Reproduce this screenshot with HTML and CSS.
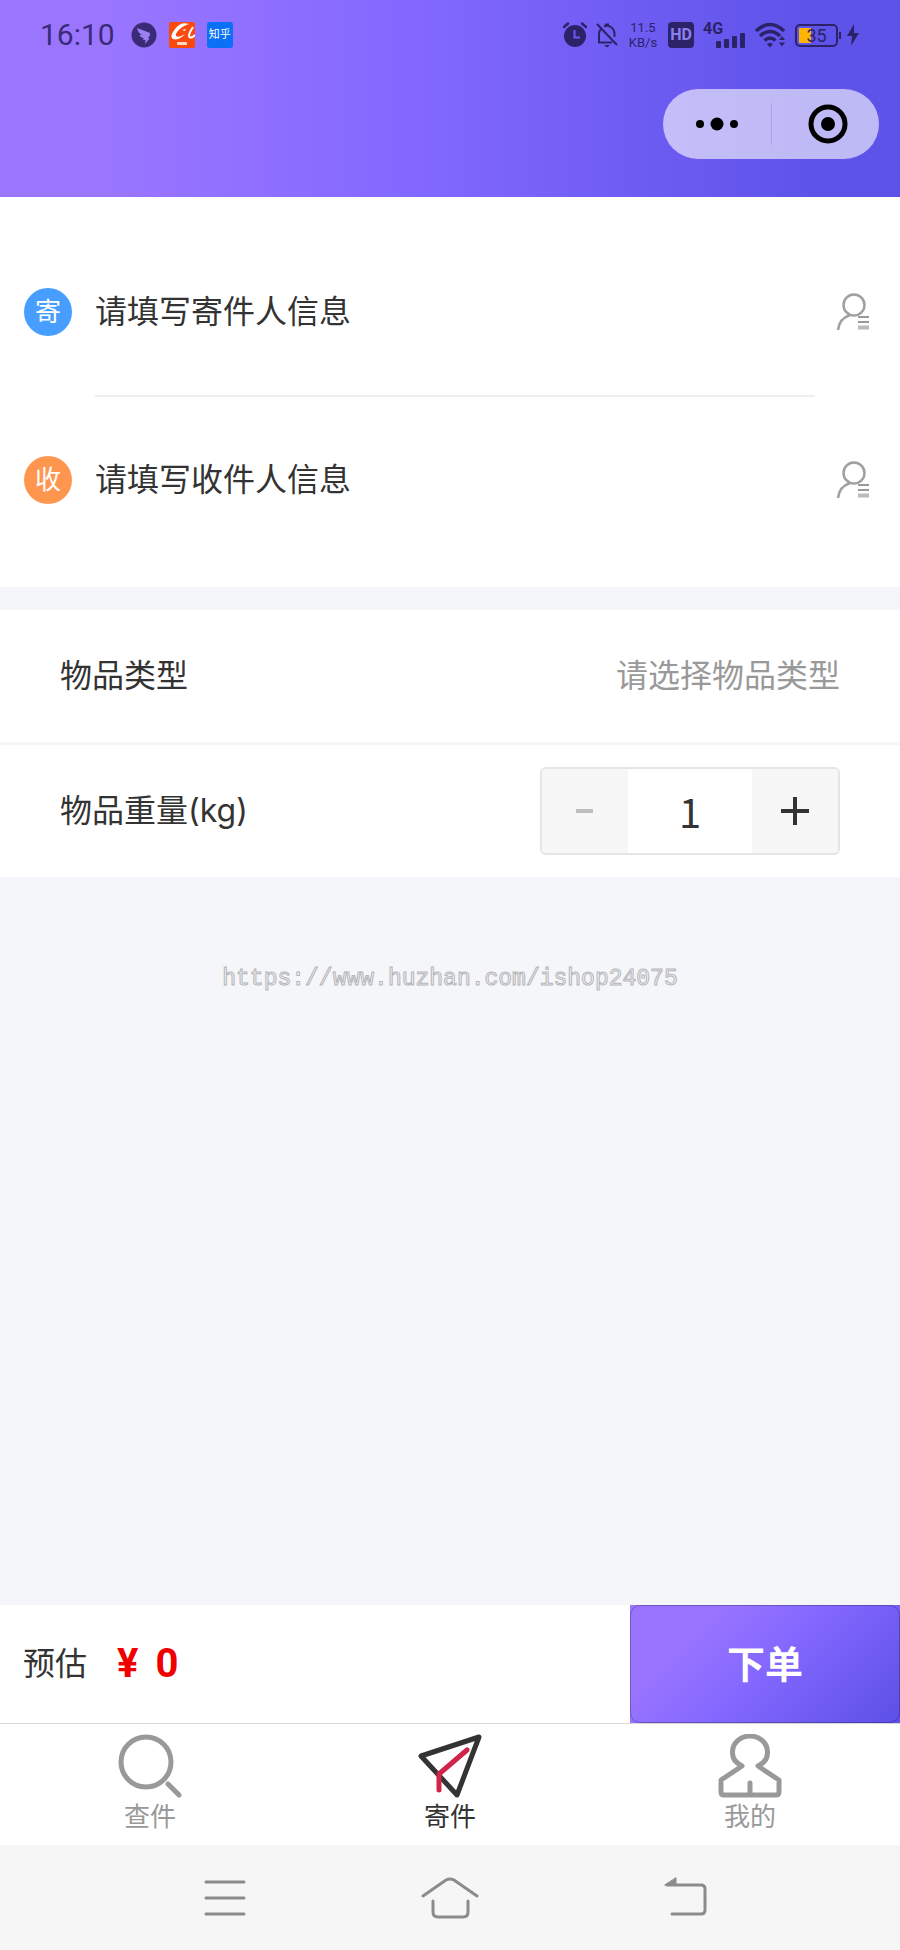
FILE: index.html
```
<!DOCTYPE html>
<html lang="zh-CN">
<head>
    <meta charset="UTF-8">
    <meta name="viewport" content="width=device-width, initial-scale=1.0">
    <title>寄件</title>
    <link rel="stylesheet" href="styles.css">
</head>
<body>
    <header class="header">
        <div class="status-bar">
            <div class="status-left">
                <span class="time">16:10</span>
                <svg width="26" height="26" viewBox="0 0 26 26">
                    <circle cx="13" cy="13" r="12.500" fill="#3b2a78"/>
                    <path d="M6 6 L18 10.500 Q20 11.500 18.500 14 L17 16 L18.500 16.500 L14 22 L14.500 18 L11.500 17.500 L13 16 Q9 15.500 8.500 13 L11 13 Q7 11 6 6 Z" fill="#9a80f0"/>
                </svg>
                <svg width="26" height="26" viewBox="0 0 26 26">
                    <rect width="26" height="26" rx="2" fill="#fb4a0e"/>
                    <path d="M20 2 Q12 -1 6 7 Q0 15 4 17 Q10 19 16 12 Q10 16 7 14 Q6 11 12 6 Q16 3 20 2 Z M13 8 L17 7 L16 9 Z" fill="#fff"/>
                    <path d="M24 5 Q18 14 21 15.500 Q23 16 26 13" fill="none" stroke="#fff" stroke-width="2"/>
                    <rect x="8" y="20" width="10" height="3" rx="1" fill="#ffd6c2"/>
                </svg>
                <span class="zhihu">知乎</span>
            </div>
            <div class="status-right">
                <svg width="24" height="26" viewBox="0 0 24 26">
                    <circle cx="12" cy="14" r="11" fill="#2c2267"/>
                    <path d="M1 5 L5 1.500 M23 5 L19 1.500" stroke="#2c2267" stroke-width="2.500" stroke-linecap="round"/>
                    <path d="M11.500 8 V15.500 H17" fill="none" stroke="#6a5bee" stroke-width="2"/>
                </svg>
                <svg width="22" height="26" viewBox="0 0 22 26">
                    <path d="M3 20 V12 Q3 9 5 7 M8 4.500 Q11 3 14 4.500 Q18.500 7 18.500 12 V15 M2 20.500 H16" fill="none" stroke="#2c2267" stroke-width="2"/>
                    <path d="M9 1.500 H13 V4 H9 Z M8 23 H14 L11 25.500 Z" fill="#2c2267"/>
                    <path d="M1 2 L21 23" stroke="#2c2267" stroke-width="2"/>
                </svg>
                <span class="speed"><span>11.5</span><span>KB/s</span></span>
                <span class="hd">HD</span>
                <span class="signal">
                    <span class="signal-label">4G</span>
                    <svg width="30" height="15" viewBox="0 0 30 15">
                        <g fill="#2c2267">
                            <rect x="0" y="8" width="5" height="7" rx="1"/>
                            <rect x="8" y="6" width="5" height="9" rx="1"/>
                            <rect x="16" y="3" width="5" height="12" rx="1"/>
                            <rect x="24" y="0" width="5" height="15" rx="1"/>
                        </g>
                    </svg>
                </span>
                <svg width="31" height="26" viewBox="0 0 31 26">
                    <g fill="none" stroke="#2c2267" stroke-width="3.500">
                        <path d="M1 9 Q15 -4 29 9"/>
                        <path d="M5 14 Q15 5 25 14"/>
                        <path d="M9.500 18.500 Q15 13.500 20.500 18.500"/>
                    </g>
                    <path d="M12 22 Q15 20 18 22 L15 25.500 Z M24 18 L27 14 L30 18 Z M24 20.500 L27 24.500 L30 20.500 Z" fill="#2c2267"/>
                </svg>
                <span class="battery">35</span>
                <svg width="12" height="22" viewBox="0 0 12 22">
                    <path d="M7 0 L0 12 H5 L4 22 L12 9 H7 Z" fill="#2c2267"/>
                </svg>
            </div>
        </div>
        <div class="capsule">
            <button class="capsule-btn" type="button" aria-label="更多">
                <svg width="44" height="16" viewBox="0 0 44 16">
                    <circle cx="5" cy="8" r="4"/>
                    <circle cx="22" cy="8" r="6.500"/>
                    <circle cx="39" cy="8" r="4"/>
                </svg>
            </button>
            <button class="capsule-btn" type="button" aria-label="关闭">
                <svg width="40" height="40" viewBox="0 0 40 40">
                    <circle cx="20" cy="20" r="17" fill="none" stroke="#000" stroke-width="5"/>
                    <circle cx="20" cy="20" r="7"/>
                </svg>
            </button>
        </div>
    </header>

    <main class="main">
        <section class="address">
            <div class="address-row">
                <span class="badge badge-send">寄</span>
                <a class="address-text" href="#sender">请填写寄件人信息</a>
                <button type="button" aria-label="寄件人地址簿">
                    <svg width="34" height="38" viewBox="0 0 34 38">
                        <circle cx="18" cy="12" r="10.500" fill="none" stroke="#a0a0a0" stroke-width="2.500"/>
                        <path d="M14 22 Q3 26 2 37" fill="none" stroke="#a0a0a0" stroke-width="2.500"/>
                        <path d="M22 24 H33 M22 29 H33" stroke="#999" stroke-width="2"/>
                        <path d="M22 34.500 H33" stroke="#bbb" stroke-width="4"/>
                    </svg>
                </button>
            </div>
            <hr class="address-line">
            <div class="address-row">
                <span class="badge badge-receive">收</span>
                <a class="address-text" href="#receiver">请填写收件人信息</a>
                <button type="button" aria-label="收件人地址簿">
                    <svg width="34" height="38" viewBox="0 0 34 38">
                        <circle cx="18" cy="12" r="10.500" fill="none" stroke="#a0a0a0" stroke-width="2.500"/>
                        <path d="M14 22 Q3 26 2 37" fill="none" stroke="#a0a0a0" stroke-width="2.500"/>
                        <path d="M22 24 H33 M22 29 H33" stroke="#999" stroke-width="2"/>
                        <path d="M22 34.500 H33" stroke="#bbb" stroke-width="4"/>
                    </svg>
                </button>
            </div>
        </section>

        <section class="goods">
            <div class="goods-row">
                <label for="goodsType">物品类型</label>
                <select id="goodsType" class="goods-type">
                    <option>请选择物品类型</option>
                </select>
            </div>
            <div class="goods-row">
                <label for="weight">物品重量(kg)</label>
                <div class="stepper">
                    <button id="minusBtn" class="step-btn" type="button" aria-label="减少" disabled>
                        <svg width="28" height="28" viewBox="0 0 28 28"><path d="M5 14 H22" stroke="#bfbfbf" stroke-width="4"/></svg>
                    </button>
                    <input id="weight" class="step-input" type="text" inputmode="numeric" value="1">
                    <button id="plusBtn" class="step-btn" type="button" aria-label="增加">
                        <svg width="28" height="28" viewBox="0 0 28 28"><path d="M0 14 H28 M14 0 V28" stroke="#333" stroke-width="4"/></svg>
                    </button>
                </div>
            </div>
        </section>

        <p class="watermark">https://www.huzhan.com/ishop24075</p>
    </main>

    <footer>
        <div class="order-bar">
            <span class="order-label">预估</span>
            <span class="price"><span>¥</span><span>0</span></span>
            <div class="order-action">
                <button class="order-btn" type="button">下单</button>
            </div>
        </div>
        <nav class="tab-bar">
            <a class="tab" href="#query">
                <svg width="64" height="64" viewBox="0 0 64 64" fill="none" stroke="#999" stroke-width="5" stroke-linecap="round">
                    <circle cx="28" cy="28" r="25"/>
                    <path d="M50 50 L61 61"/>
                </svg>
                <span>查件</span>
            </a>
            <a class="tab active" href="#send">
                <svg width="64" height="64" viewBox="0 0 64 64" fill="none" stroke-width="5" stroke-linecap="round" stroke-linejoin="round">
                    <path d="M3 22 L61 3 L39 61 Z" stroke="#333"/>
                    <path d="M49 16 L21 40 V56" stroke="#d0244b"/>
                </svg>
                <span>寄件</span>
            </a>
            <a class="tab" href="#mine">
                <svg width="64" height="64" viewBox="0 0 64 64" fill="none" stroke="#999" stroke-width="5" stroke-linecap="round" stroke-linejoin="round">
                    <path d="M24 32 Q14 27 14.500 18 A17.500 16 0 0 1 49.500 18 Q50 27 40 32 L61 46 V58 Q61 61 58 61 H6 Q3 61 3 58 V46 Z"/>
                    <path d="M32 49 V60"/>
                </svg>
                <span>我的</span>
            </a>
        </nav>
        <div class="system-nav">
            <button type="button" aria-label="最近任务">
                <svg width="42" height="42" viewBox="0 0 42 42" fill="none" stroke="#8b8b8b" stroke-width="3" stroke-linecap="round">
                    <path d="M2 5 H40 M2 21 H40 M2 37 H40"/>
                </svg>
            </button>
            <button type="button" aria-label="主屏幕">
                <svg width="58" height="42" viewBox="0 0 58 42" fill="none" stroke="#8b8b8b" stroke-width="3" stroke-linecap="round">
                    <path d="M2 19 L25 3 Q29 1 33 3 L56 19"/>
                    <path d="M12 24 V35 Q12 40 17 40 H42 Q47 40 47 35 V24"/>
                </svg>
            </button>
            <button type="button" aria-label="返回">
                <svg width="64" height="42" viewBox="0 0 64 42" fill="none" stroke="#8b8b8b" stroke-width="3" stroke-linecap="round">
                    <path d="M24 8 H58 Q62 8 62 12 V33 Q62 37 58 37 H29"/>
                    <path d="M33 1 V8 H22 Z" fill="#8b8b8b" stroke-width="1"/>
                </svg>
            </button>
        </div>
    </footer>

    <script>
        const minusBtn = document.getElementById('minusBtn');
        const plusBtn = document.getElementById('plusBtn');
        const weight = document.getElementById('weight');

        // Weight never drops below 1 kg
        function setWeight(value) {
            weight.value = Math.max(1, value);
            minusBtn.disabled = weight.value <= 1;
        }

        minusBtn.addEventListener('click', () => setWeight(Number(weight.value) - 1));
        plusBtn.addEventListener('click', () => setWeight(Number(weight.value) + 1));
    </script>
</body>
</html>
```
FILE: styles.css
```
* {
    box-sizing: border-box;
}
body {
    display: flex;
    flex-direction: column;
    min-height: 100vh;
    margin: 0;
    background-color: #f4f6fa;
    color: #333;
    font-family: Inter, "Noto Sans CJK SC", sans-serif;
    font-size: 32px;
    line-height: 48px;
}
button,
input,
select {
    margin: 0;
    padding: 0;
    border: none;
    background: none;
    color: inherit;
    font: inherit;
}
button {
    display: flex;
    align-items: center;
    justify-content: center;
    cursor: pointer;
}
a {
    color: inherit;
    text-decoration: none;
}
svg {
    display: block;
    flex: none;
}

/* header */
.header {
    padding-bottom: 38px;
    background: linear-gradient(90deg, #9a76ff 12%, #8469ff 44%, #5e53e9 90%);
}
.status-bar {
    display: flex;
    align-items: center;
    justify-content: space-between;
    height: 70px;
    padding: 0 41px 0 40px;
    color: #2c2267;
    font-family: Roboto, "Noto Sans CJK SC", sans-serif;
}
.status-left,
.status-right {
    display: flex;
    align-items: center;
}
.status-left {
    gap: 12px;
}
.status-right {
    gap: 9px;
}
.time {
    margin-right: 4px;
    color: #3b2a78;
    font-size: 30px;
}
.zhihu {
    width: 26px;
    height: 26px;
    border-radius: 3px;
    background-color: #0a70f5;
    color: white;
    font-size: 11px;
    line-height: 25px;
    text-align: center;
}
.speed {
    display: flex;
    flex-direction: column;
    align-items: center;
    width: 32px;
    font-size: 13px;
    line-height: 15px;
}
.hd {
    width: 26px;
    height: 26px;
    border-radius: 4px;
    background-color: #2c2267;
    color: #8b80f2;
    font-size: 16px;
    font-weight: bold;
    line-height: 26px;
    text-align: center;
}
.signal {
    display: flex;
    flex-direction: column;
    align-items: flex-end;
    width: 43px;
    height: 26px;
}
.signal-label {
    align-self: flex-start;
    height: 11px;
    font-size: 16px;
    font-weight: bold;
    line-height: 14px;
}
.battery {
    position: relative;
    width: 43px;
    height: 23px;
    padding: 2px;
    border: 2px solid #2c2267;
    border-radius: 5px;
    background: linear-gradient(90deg, #ffb400 12px, transparent 12px) content-box;
    font-size: 18px;
    line-height: 16px;
    text-align: center;
}
.battery::after {
    content: "";
    position: absolute;
    top: 6px;
    right: -5px;
    width: 2px;
    height: 7px;
    background-color: #2c2267;
}
.capsule {
    display: flex;
    align-items: center;
    width: 216px;
    height: 70px;
    margin: 19px 21px 0 auto;
    border-radius: 35px;
    background-color: rgba(255, 255, 255, 0.6);
}
.capsule-btn {
    width: 50%;
    height: 42px;
}
.capsule-btn + .capsule-btn {
    padding-left: 4px;
    border-left: 1px solid #aaa4e8;
}

/* sender and receiver */
.main {
    flex: 1;
}
.address {
    padding: 32px 0 24px;
    background-color: white;
}
.address-row {
    display: flex;
    align-items: center;
    height: 166px;
    padding: 0 30px 0 24px;
}
.badge {
    width: 48px;
    height: 48px;
    margin-right: 23px;
    border-radius: 50%;
    color: white;
    font-size: 26px;
    line-height: 48px;
    text-align: center;
}
.badge-send {
    background-color: #479eff;
}
.badge-receive {
    background-color: #ff964f;
}
.address-text {
    flex: 1;
}
.address-line {
    height: 2px;
    margin: 0 85px 0 95px;
    border: none;
    background-color: #eee;
}

/* goods */
.goods {
    margin-top: 23px;
    background-color: white;
}
.goods-row {
    display: flex;
    align-items: center;
    justify-content: space-between;
    height: 132px;
    padding: 0 60px;
}
.goods-row + .goods-row {
    height: 135px;
    border-top: 3px solid #f6f6f7;
}
.goods-type {
    appearance: none;
    height: 48px;
    color: #999;
    text-align-last: right;
}
.stepper {
    display: flex;
    width: 300px;
    height: 88px;
    border: 2px solid #e5e5e5;
    border-radius: 6px;
    overflow: hidden;
}
.step-btn {
    width: 86px;
    background-color: #f7f7f7;
}
.step-input {
    flex: 1;
    min-width: 0;
    font-family: "Noto Sans CJK SC", sans-serif;
    font-size: 40px;
    text-align: center;
}
.watermark {
    margin: 78px 0 0;
    color: #f4f6fa;
    font-family: "Liberation Mono", monospace;
    font-size: 23px;
    text-align: center;
    -webkit-text-stroke: 1px #b4b5b8;
}

/* order bar */
.order-bar {
    display: flex;
    align-items: center;
    height: 118px;
    background-color: white;
}
.order-label {
    margin-left: 23px;
}
.price {
    display: flex;
    gap: 17px;
    margin-left: 30px;
    color: #f00000;
    font-family: Roboto, sans-serif;
    font-size: 40px;
    font-weight: bold;
}
.order-action {
    width: 30%;
    height: 100%;
    margin-left: auto;
    background: linear-gradient(135deg, #9874ff 25%, #8468ff 50%, #5c50e6 100%);
}
.order-btn {
    width: 100%;
    height: 100%;
    border: 1px solid rgba(0, 0, 0, 0.25);
    border-radius: 10px;
    color: white;
    font-size: 38px;
    font-weight: bold;
}

/* tabs */
.tab-bar {
    display: flex;
    border-top: 1px solid #d8d8d8;
    background-color: white;
}
.tab {
    display: flex;
    flex: 1;
    flex-direction: column;
    align-items: center;
    padding: 10px 0 9px;
    color: #999;
    font-size: 26px;
    line-height: 38px;
}
.tab.active {
    color: #333;
}

/* system navigation */
.system-nav {
    display: grid;
    grid-template-columns: repeat(3, 1fr);
    height: 105px;
    padding: 0 112px;
    background-color: #f6f6f6;
}
```
